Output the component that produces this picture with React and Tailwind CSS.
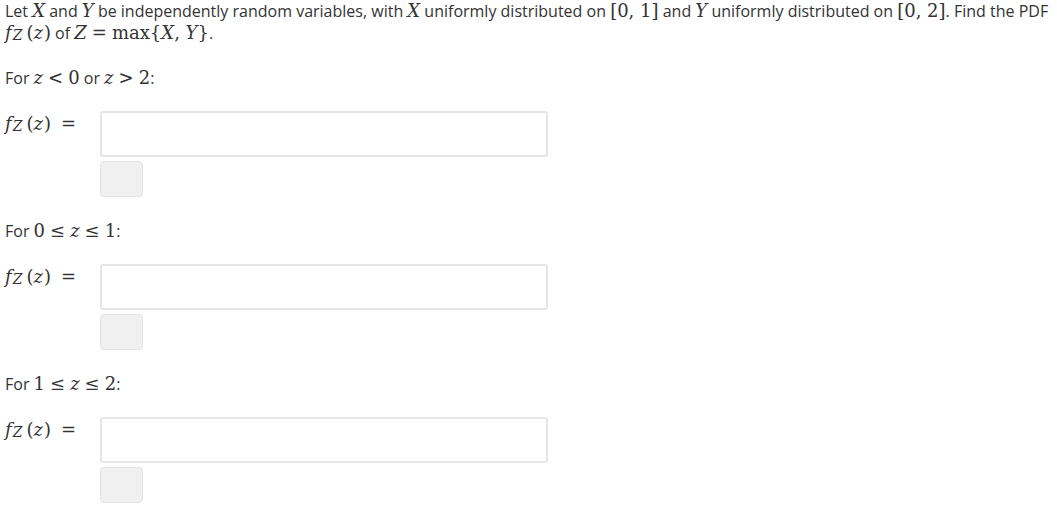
import React from 'react';

const M = ({ children }) => (
  <span className="text-[18px] leading-none" style={{ fontFamily: '"DejaVu Serif", "Liberation Serif", serif' }}>
    {children}
  </span>
);
const I = ({ children }) => <i>{children}</i>;
const Op = ({ children }) => <span className="mx-[5px]">{children}</span>;

function FZ({ eq }) {
  return (
    <M>
      <I>f</I>
      <sub className="text-[14px] italic leading-none relative top-[1px] ml-[1px]">Z</sub>
      <span className="ml-[4px]">(</span>
      <I>z</I>
      <span className="ml-[1px]">)</span>
      {eq && <span className="ml-[10px]">=</span>}
    </M>
  );
}

function Part({ cond }) {
  return (
    <div className="mb-[23px]">
      <p className="leading-[22px] h-[22px]">For {cond}:</p>
      <div className="flex mt-[22px]">
        <div className="w-[95px] pt-[2px] leading-[22px]">
          <FZ eq />
        </div>
        <div className="flex flex-col gap-[4px]">
          <div className="w-[448px] h-[46px] bg-white border-2 border-[#e6e6e6] rounded-[3px]" />
          <div className="w-[43px] h-[36px] bg-[#f0f0f0] border border-[#e2e2e2] rounded-[4px]" />
        </div>
      </div>
    </div>
  );
}

export default function App() {
  return (
    <div
      className="w-[1057px] h-[512px] bg-white text-[#333] text-[16px] px-[5px] overflow-hidden"
      style={{ fontFamily: '"Open Sans", "Noto Sans", sans-serif' }}
    >
      <p className="leading-[22px] mb-[23px] whitespace-nowrap">
        Let <M><I>X</I></M> and <M><I>Y</I></M> be independently random variables, with <M><I>X</I></M> uniformly
        distributed on <M>[0, 1]</M> and <M><I>Y</I></M> uniformly distributed on <M>[0, 2]</M>. Find the PDF
        <br />
        <FZ /> of <M><I>Z</I><Op>=</Op>max{'{'}<I>X</I>, <I>Y</I>{'}'}</M>.
      </p>
      <Part cond={<><M><I>z</I><Op>&lt;</Op>0</M> or <M><I>z</I><Op>&gt;</Op>2</M></>} />
      <Part cond={<M>0<Op>≤</Op><I>z</I><Op>≤</Op>1</M>} />
      <Part cond={<M>1<Op>≤</Op><I>z</I><Op>≤</Op>2</M>} />
    </div>
  );
}
